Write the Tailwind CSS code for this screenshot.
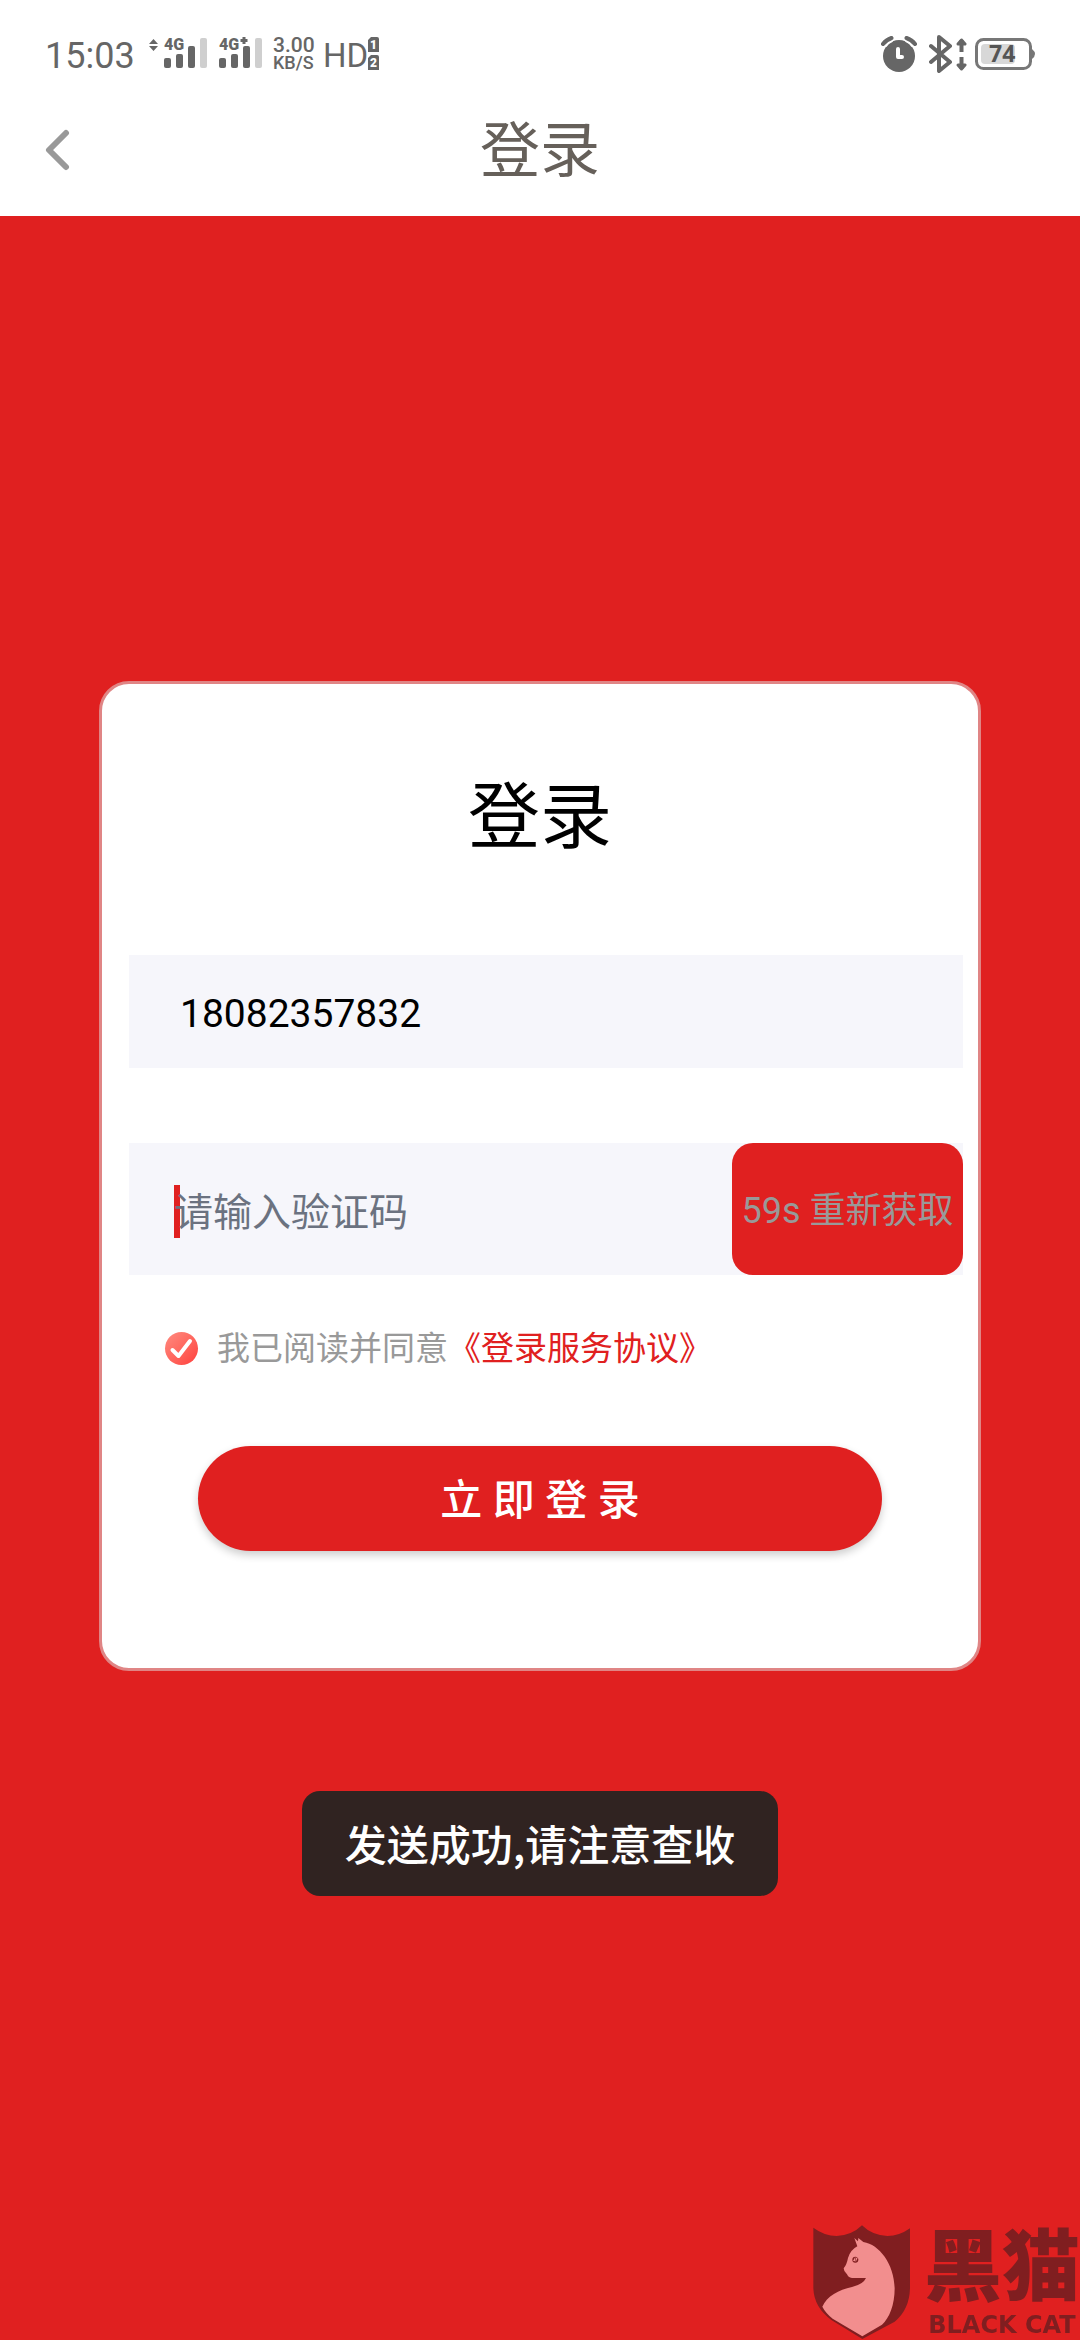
<!DOCTYPE html>
<html lang="zh-CN">
  <head>
    <meta charset="UTF-8" />
    <meta name="viewport" content="width=device-width, initial-scale=1.0" />
    <title>登录</title>
    <script src="https://cdn.jsdelivr.net/npm/@tailwindcss/browser@4"></script>
  </head>

  <body class="flex min-h-screen flex-col bg-[#e02020] font-[Roboto,'Noto_Sans_CJK_SC',sans-serif]">
    <!-- Status bar -->
    <div class="flex h-[84px] items-center justify-between bg-white px-[45px] pt-[24px] text-[#666]">
      <div class="flex items-center">
        <span class="w-[104px] pt-[3px] text-[36px] leading-[60px]">15:03</span>
        <svg class="h-[36px] w-[58px] overflow-visible" viewBox="0 0 58 36" fill="#666">
          <path d="M4.500 3 9 8H0ZM4.500 15 9 10H0Z" />
          <text x="15" y="14" font-size="16" font-weight="900">4G</text>
          <rect x="15" y="22" width="7" height="10" rx="2" />
          <rect x="27" y="18" width="7" height="14" rx="2" />
          <rect x="39" y="10" width="7" height="22" rx="2" />
          <rect x="51" y="2" width="7" height="30" rx="2" fill="#cfcfcf" />
        </svg>
        <svg class="ml-[12px] h-[36px] w-[43px] overflow-visible" viewBox="0 0 43 36" fill="#666">
          <text x="0" y="14" font-size="16" font-weight="900">4G</text>
          <path d="M25 1v7M21.500 4.500h7" stroke="#666" stroke-width="3" />
          <rect x="0" y="22" width="7" height="10" rx="2" />
          <rect x="12" y="18" width="7" height="14" rx="2" />
          <rect x="24" y="10" width="7" height="22" rx="2" />
          <rect x="36" y="2" width="7" height="30" rx="2" fill="#cfcfcf" />
        </svg>
        <div class="ml-[11px] w-[50px] font-medium">
          <p class="text-[21px] leading-[18px]">3.00</p>
          <p class="text-[18px] leading-[18px]">KB/S</p>
        </div>
        <span class="pt-[3px] text-[33px] leading-[60px]">HD</span>
        <svg class="h-[36px] w-[11px] overflow-visible" viewBox="0 0 11 36" fill="#666">
          <path d="M3 1H9a2 2 0 0 1 2 2V16H0V4ZM3 19H9a2 2 0 0 1 2 2V34H0V22Z" />
          <text x="2" y="13" font-size="12" font-weight="900" fill="#fff">1</text>
          <text x="2" y="31" font-size="12" font-weight="900" fill="#fff">2</text>
        </svg>
      </div>

      <div class="flex items-center">
        <svg class="h-[36px] w-[36px]" viewBox="0 0 36 36" fill="none">
          <circle cx="18" cy="20" r="16" fill="#666" />
          <path d="M2 9Q5 4 10.500 2M34 9Q31 4 25.500 2" stroke="#fff" stroke-width="8" />
          <path d="M2 8Q5 4 10.500 2M34 8Q31 4 25.500 2" stroke="#666" stroke-width="4" stroke-linecap="round" />
          <path d="M17 13v8h4" stroke="#fff" stroke-width="4" stroke-linecap="round" stroke-linejoin="round" />
        </svg>
        <svg class="ml-[12px] h-[38px] w-[38px]" viewBox="0 0 38 38" fill="none" stroke="#666">
          <path d="M2 11 21 27 10 36V2L21 11 2 27" stroke-width="4" stroke-linecap="round" stroke-linejoin="round" />
          <path d="M32.500 5v12M32.500 22v12" stroke-width="4" />
          <path d="M29 9 32.500 5 36 9ZM29 30 32.500 34 36 30Z" fill="#666" stroke-width="3" stroke-linejoin="round" />
        </svg>
        <svg class="ml-[8px] h-[32px] w-[60px] overflow-visible" viewBox="0 0 60 32" fill="none">
          <rect x="1.500" y="1.500" width="54" height="29" rx="7" stroke="#777" stroke-width="3" />
          <path d="M57 11q6 5 0 10Z" fill="#777" />
          <rect x="6" y="6" width="34" height="20" rx="4" fill="#d8d8d8" />
          <text x="14" y="24" font-size="23" font-weight="700" fill="#555" class="font-['Open_Sans']">74</text>
        </svg>
      </div>
    </div>

    <!-- Header -->
    <header class="grid h-[132px] grid-cols-3 items-center bg-white px-[45px]">
      <button type="button" aria-label="返回" class="justify-self-start">
        <svg class="h-[42px] w-[26px]" viewBox="0 0 26 42" fill="none">
          <path d="M21 4 4 21 21 38" stroke="#999" stroke-width="6" stroke-linecap="round" stroke-linejoin="round" />
        </svg>
      </button>
      <h1 class="pt-[4px] text-center text-[60px] leading-[84px] text-[#66605a]">登录</h1>
    </header>

    <!-- Login card -->
    <main class="flex flex-1 flex-col items-center px-[99px] pt-[465px]">
      <form class="w-full rounded-[30px] border-3 border-[#e08585] bg-white pt-[82px] pr-[15px] pb-[117px] pl-[27px]">
        <h2 class="mr-[12px] text-center text-[72px] leading-[104px] text-black">登录</h2>

        <input
          type="tel"
          aria-label="手机号"
          value="18082357832"
          class="mt-[85px] block h-[113px] w-full bg-[#f6f6fb] px-[51px] pt-[4px] text-[39px] text-black outline-none"
        />

        <div class="relative mt-[75px] flex h-[132px] bg-[#f6f6fb]">
          <span class="absolute top-[42px] left-[45px] h-[53px] w-[6px] bg-[#e02020]"></span>
          <input
            type="text"
            aria-label="验证码"
            placeholder="请输入验证码"
            class="relative min-w-0 flex-1 bg-transparent pt-[8px] pl-[45px] text-[39px] text-black outline-none placeholder:text-[#6b7280]"
          />
          <button type="button" class="w-[231px] rounded-[21px] bg-[#e02020] pt-[3px] text-[36px] text-[#999]">59s 重新获取</button>
        </div>

        <div class="mt-[48px] flex items-center pl-[36px] text-[33px] leading-[48px] text-[#999]">
          <span class="relative mr-[19px] h-[33px] w-[33px]">
            <input
              type="checkbox"
              id="agree"
              checked
              class="block h-[33px] w-[33px] appearance-none rounded-full bg-linear-to-br from-[#ff8a80] to-[#ff3b3b]"
            />
            <svg class="pointer-events-none absolute inset-0" viewBox="0 0 33 33" fill="none">
              <path d="M7.500 18 13.500 24 25 9" stroke="#fff" stroke-width="4" stroke-linecap="round" stroke-linejoin="round" />
            </svg>
          </span>
          <label for="agree" class="pt-[2px]">我已阅读并同意</label>
          <a href="#" class="pt-[2px] text-[#e02020]">《登录服务协议》</a>
        </div>

        <button
          type="submit"
          class="mt-[73px] mr-[81px] ml-[69px] flex h-[105px] w-[calc(100%-150px)] items-center justify-center rounded-full bg-[#e02020] pt-[3px] text-[42px] font-medium text-white shadow-[0_4px_8px_rgba(0,0,0,0.2)]"
        >
          立 即 登 录
        </button>
      </form>

      <!-- Toast -->
      <div
        role="status"
        class="mt-[120px] flex h-[105px] items-center rounded-[18px] bg-[#302321] px-[43px] pb-[3px] font-['Noto_Sans_CJK_SC',sans-serif] text-[42px] font-medium text-white"
      >
        发送成功,请注意查收
      </div>
    </main>

    <!-- Watermark -->
    <div class="fixed right-0 bottom-0 flex items-end gap-[13px] text-[#801e20]">
      <svg class="h-[115px] w-[98px]" viewBox="33 45 294 345">
        <path d="M34 53Q68 78 104 78Q150 76 180 46Q210 76 256 78Q292 78 324 55V235Q322 300 278 335L181 387 88 330Q36 292 34 235Z" fill="#801e20" />
        <path d="M157 84 168 94 169 84 184 96C232 104 276 160 278 235C278 285 262 325 240 344L181 379 92 326Q70 308 61 290C75 258 110 240 150 231Q184 223 192 204L150 204C142 203 137 199 135 193Q125 185 125 175Q134 165 138 144Q145 120 166 109Z" fill="#f28e8e" />
        <ellipse cx="160" cy="149" rx="9" ry="9" fill="#801e20" />
        <path d="M153 153 160 140V154ZM162 144 168 141 161 157Z" fill="#f28e8e" />
      </svg>
      <div class="flex flex-col items-center">
        <p class="text-[78px] leading-[82px] font-black">黑猫</p>
        <p class="font-['DejaVu_Sans'] text-[24px] leading-[30px] font-bold">BLACK CAT</p>
      </div>
    </div>
  </body>
</html>
